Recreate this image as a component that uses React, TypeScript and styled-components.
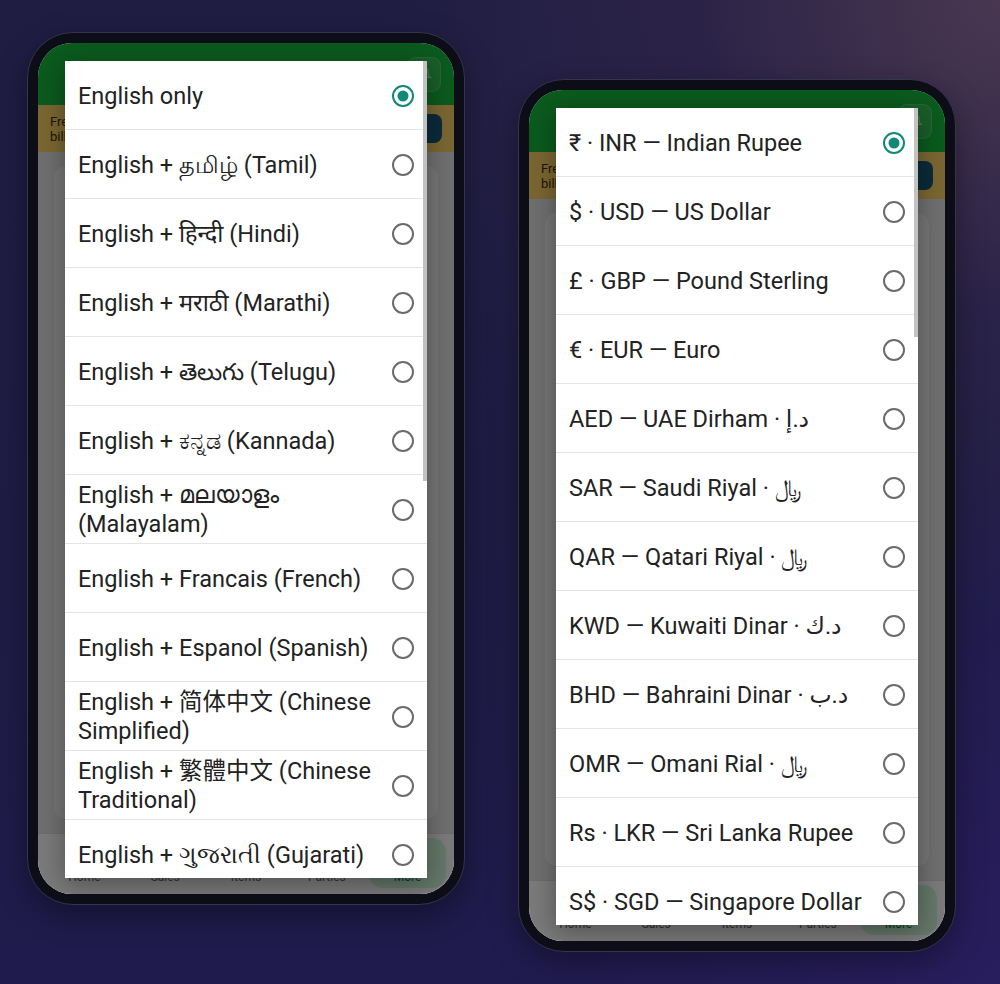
import React from "react";
import styled, { createGlobalStyle } from "styled-components";

const GlobalStyle = createGlobalStyle`
  html, body, #root {
    margin: 0;
    padding: 0;
    height: 100%;
  }
  body {
    background: #1e1c40;
    font-family: Roboto, "Noto Sans", "DejaVu Sans", "Noto Sans CJK SC", sans-serif;
  }
`;

const languages = [
  "English only",
  "English + தமிழ் (Tamil)",
  "English + हिन्दी (Hindi)",
  "English + मराठी (Marathi)",
  "English + తెలుగు (Telugu)",
  "English + ಕನ್ನಡ (Kannada)",
  "English + മലയാളം (Malayalam)",
  "English + Francais (French)",
  "English + Espanol (Spanish)",
  "English + 简体中文 (Chinese Simplified)",
  "English + 繁體中文 (Chinese Traditional)",
  "English + ગુજરાતી (Gujarati)",
];

const currencies = [
  "₹ · INR — Indian Rupee",
  "$ · USD — US Dollar",
  "£ · GBP — Pound Sterling",
  "€ · EUR — Euro",
  "AED — UAE Dirham · د.إ",
  "SAR — Saudi Riyal · ﷼",
  "QAR — Qatari Riyal · ﷼",
  "KWD — Kuwaiti Dinar · د.ك",
  "BHD — Bahraini Dinar · د.ب",
  "OMR — Omani Rial · ﷼",
  "Rs · LKR — Sri Lanka Rupee",
  "S$ · SGD — Singapore Dollar",
];

const navItems = ["Home", "Sales", "Items", "Parties", "More"];

export default function App() {
  return (
    <>
      <GlobalStyle />
      <Page>
        <PhoneMock options={languages} thumbHeight={420} />
        <PhoneMock options={currencies} thumbHeight={229} offset={47} />
      </Page>
    </>
  );
}

function PhoneMock({
  options,
  thumbHeight,
  offset = 0,
}: {
  options: string[];
  thumbHeight: number;
  offset?: number;
}) {
  return (
    <Phone offset={offset}>
      <Screen>
        <AppHeader>
          <Logo />
          <HeaderButton>
            <svg width="16" height="16" viewBox="0 0 24 24" fill="none" stroke="currentColor" strokeWidth="2">
              <path d="M6 8a6 6 0 0 1 12 0c0 7 3 9 3 9H3s3-2 3-9" />
              <path d="M10.3 21a1.94 1.94 0 0 0 3.4 0" />
            </svg>
          </HeaderButton>
        </AppHeader>
        <Banner>
          <BannerText>
            Free trial — 14 days left
            <br />
            billing & invoices unlocked
          </BannerText>
          <BannerButton />
        </Banner>
        <Body>
          <Card />
        </Body>
        <BottomNav>
          {navItems.map((n) => (
            <NavItem key={n} active={n === "More"}>
              <NavIcon active={n === "More"} />
              {n}
            </NavItem>
          ))}
        </BottomNav>

        <Overlay>
          <Sheet>
            {options.map((o, i) => (
              <OptionRow key={o}>
                <OptionLabel>{o}</OptionLabel>
                <Radio checked={i === 0} />
              </OptionRow>
            ))}
            <ScrollThumb style={{ height: thumbHeight }} />
          </Sheet>
        </Overlay>
      </Screen>
    </Phone>
  );
}

const Page = styled.div`
  width: 1000px;
  height: 984px;
  box-sizing: border-box;
  padding: 32px 0 0 27px;
  display: flex;
  align-items: flex-start;
  gap: 53px;
  overflow: hidden;
  background:
    radial-gradient(circle at 100% 0%, rgba(78, 58, 82, 0.9) 0%, rgba(60, 44, 78, 0.4) 22%, transparent 45%),
    radial-gradient(circle at 100% 100%, rgba(44, 30, 100, 0.7) 0%, transparent 40%),
    linear-gradient(180deg, #1f1d42 0%, #1e1c45 60%, #1f1b4c 100%);
`;

const Phone = styled.div<{ offset: number }>`
  margin-top: ${(p) => p.offset}px;
  width: 438px;
  height: 873px;
  box-sizing: border-box;
  padding: 10px;
  border: 1px solid #34344e;
  border-radius: 46px;
  background: #0d0d18;
  box-shadow: 0 10px 30px rgba(0, 0, 0, 0.35);
`;

const Screen = styled.div`
  position: relative;
  height: 100%;
  border-radius: 34px;
  overflow: hidden;
  display: flex;
  flex-direction: column;
  background: #dedede;
`;

const AppHeader = styled.div`
  height: 62px;
  flex: none;
  background: #16b43c;
  display: flex;
  align-items: center;
  justify-content: space-between;
  padding: 0 13px 0 97px;
`;

const Logo = styled.div`
  width: 27px;
  height: 27px;
  border-radius: 7px;
  background: rgba(255, 255, 255, 0.3);
`;

const HeaderButton = styled.div`
  width: 34px;
  height: 35px;
  border-radius: 9px;
  background: rgba(255, 255, 255, 0.12);
  border: 1px solid rgba(255, 255, 255, 0.18);
  box-sizing: border-box;
  color: rgba(255, 255, 255, 0.55);
  display: flex;
  align-items: center;
  justify-content: center;
`;

const Banner = styled.div`
  height: 47px;
  flex: none;
  background: #f4cc64;
  display: flex;
  align-items: center;
  justify-content: space-between;
  padding: 0 12px;
`;

const BannerText = styled.div`
  font-size: 13px;
  line-height: 15px;
  color: #3a2f10;
`;

const BannerButton = styled.div`
  width: 40px;
  height: 29px;
  border-radius: 8px;
  background: #165474;
`;

const Body = styled.div`
  flex: 1;
  padding: 14px 16px;
  display: flex;
`;

const Card = styled.div`
  flex: 1;
  border-radius: 12px;
  background: #ececec;
`;

const BottomNav = styled.div`
  height: 54px;
  flex: none;
  background: #f4f4f4;
  border-top: 1px solid #d8d8d8;
  display: grid;
  grid-template-columns: repeat(5, 1fr);
  padding: 0 6px 6px;
`;

const NavItem = styled.div<{ active: boolean }>`
  display: flex;
  flex-direction: column;
  align-items: center;
  justify-content: flex-end;
  gap: 4px;
  font-size: 12px;
  color: ${(p) => (p.active ? "#15803d" : "#666")};
  border-radius: 14px;
  background: ${(p) => (p.active ? "#c9efd2" : "transparent")};
  margin: 4px 2px 0;
  padding-bottom: 4px;
`;

const NavIcon = styled.div<{ active: boolean }>`
  width: 20px;
  height: 20px;
  border-radius: 5px;
  border: 2px solid ${(p) => (p.active ? "#15803d" : "#888")};
  box-sizing: border-box;
`;

const Overlay = styled.div`
  position: absolute;
  inset: 0;
  background: rgba(0, 0, 0, 0.5);
  padding: 18px 27px 16px;
  display: flex;
  flex-direction: column;
`;

const Sheet = styled.div`
  position: relative;
  flex: 1;
  background: #fff;
  overflow: hidden;
  box-shadow: 0 6px 24px rgba(0, 0, 0, 0.35);
`;

const OptionRow = styled.div`
  height: 69px;
  box-sizing: border-box;
  border-bottom: 1px solid #e4e4e4;
  display: flex;
  align-items: center;
  gap: 12px;
  padding: 2px 13px 0;
`;

const OptionLabel = styled.div`
  flex: 1;
  font-size: 23.5px;
  line-height: 29px;
  color: #222;
`;

const Radio = styled.span<{ checked: boolean }>`
  flex: none;
  position: relative;
  width: 22px;
  height: 22px;
  box-sizing: border-box;
  border-radius: 50%;
  border: ${(p) => (p.checked ? "2.5px solid #10897a" : "2px solid #6b6b6b")};
  &::after {
    content: "";
    display: ${(p) => (p.checked ? "block" : "none")};
    position: absolute;
    left: 50%;
    top: 50%;
    width: 11px;
    height: 11px;
    border-radius: 50%;
    background: #10897a;
    transform: translate(-50%, -50%);
  }
`;

const ScrollThumb = styled.div`
  position: absolute;
  top: 0;
  right: 0;
  width: 4px;
  background: #c2c2c2;
`;
